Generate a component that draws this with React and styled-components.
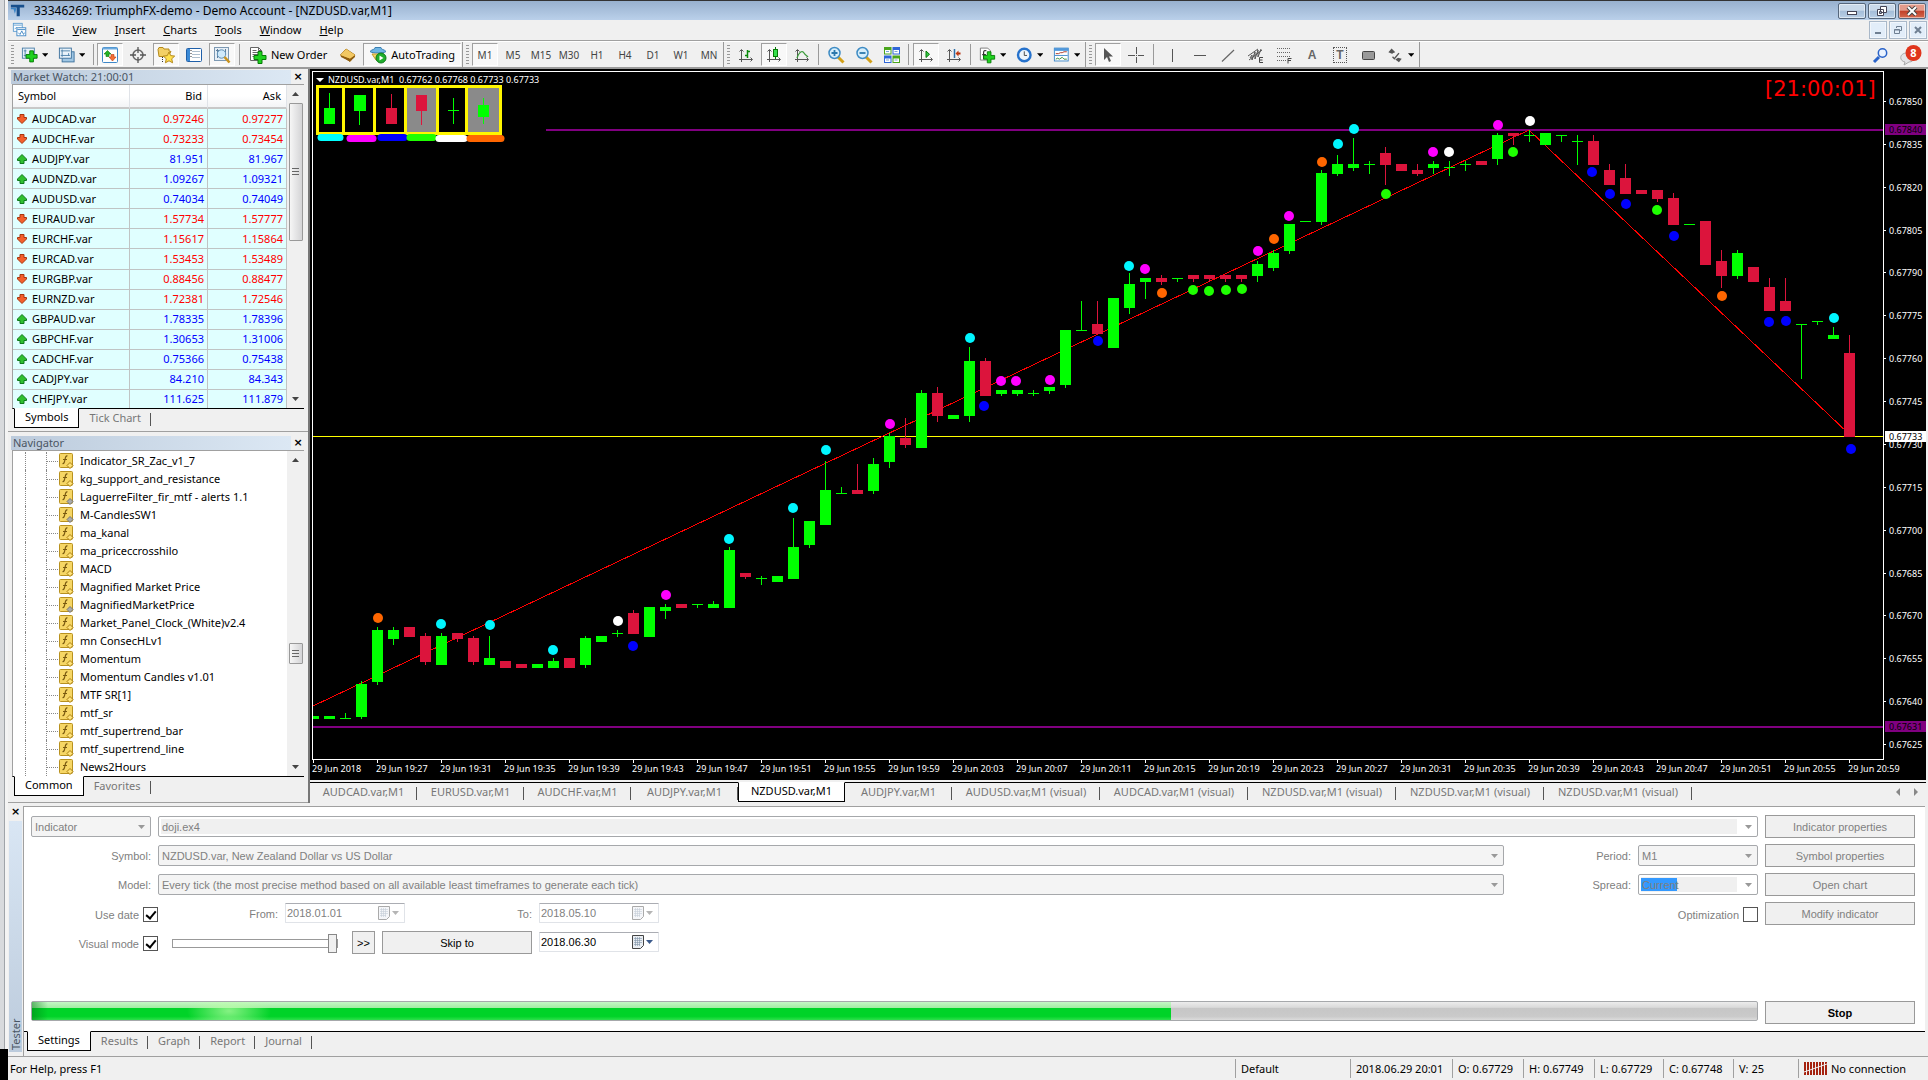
import React, { useState } from "react";
import styled, { createGlobalStyle, css } from "styled-components";

const GlobalStyle = createGlobalStyle`
  * { box-sizing: border-box; }
  body {
    margin: 0;
    background: #f0f0f0;
    font-family: "Noto Sans", "Open Sans", sans-serif;
    font-size: 11px;
    line-height: 16px;
    color: #000;
  }
  button, input, select { font: inherit; color: inherit; margin: 0; padding: 0; }
  svg { display: block; }
`;

/* ---------- data ---------- */

const menus = ["File", "View", "Insert", "Charts", "Tools", "Window", "Help"];
const periods = ["M1", "M5", "M15", "M30", "H1", "H4", "D1", "W1", "MN"];

const quotes = [
  ["AUDCAD.var", "0.97246", "0.97277", "down"],
  ["AUDCHF.var", "0.73233", "0.73454", "down"],
  ["AUDJPY.var", "81.951", "81.967", "up"],
  ["AUDNZD.var", "1.09267", "1.09321", "up"],
  ["AUDUSD.var", "0.74034", "0.74049", "up"],
  ["EURAUD.var", "1.57734", "1.57777", "down"],
  ["EURCHF.var", "1.15617", "1.15864", "down"],
  ["EURCAD.var", "1.53453", "1.53489", "down"],
  ["EURGBP.var", "0.88456", "0.88477", "down"],
  ["EURNZD.var", "1.72381", "1.72546", "down"],
  ["GBPAUD.var", "1.78335", "1.78396", "up"],
  ["GBPCHF.var", "1.30653", "1.31006", "up"],
  ["CADCHF.var", "0.75366", "0.75438", "up"],
  ["CADJPY.var", "84.210", "84.343", "up"],
  ["CHFJPY.var", "111.625", "111.879", "up"],
];

// second value: compiled only, shown with a grey diamond
const indicators = [
  ["Indicator_SR_Zac_v1_7"],
  ["kg_support_and_resistance"],
  ["LaguerreFilter_fir_mtf - alerts 1.1", true],
  ["M-CandlesSW1", true],
  ["ma_kanal"],
  ["ma_priceccrosshilo"],
  ["MACD"],
  ["Magnified Market Price"],
  ["MagnifiedMarketPrice", true],
  ["Market_Panel_Clock_(White)v2.4"],
  ["mn ConsecHLv1"],
  ["Momentum"],
  ["Momentum Candles v1.01"],
  ["MTF SR[1]"],
  ["mtf_sr"],
  ["mtf_supertrend_bar"],
  ["mtf_supertrend_line"],
  ["News2Hours"],
];

const chartTabs = [
  "AUDCAD.var,M1",
  "EURUSD.var,M1",
  "AUDCHF.var,M1",
  "AUDJPY.var,M1",
  "NZDUSD.var,M1",
  "AUDJPY.var,M1",
  "AUDUSD.var,M1 (visual)",
  "AUDCAD.var,M1 (visual)",
  "NZDUSD.var,M1 (visual)",
  "NZDUSD.var,M1 (visual)",
  "NZDUSD.var,M1 (visual)",
];

// one per minute: high, body top, body bottom, low, 1 = bull / 0 = bear
const candles = [
  [716, 716, 719, 719, 1], [716, 716, 719, 719, 1], [713, 718, 719, 719, 1],
  [681, 684, 717, 719, 1], [627, 630, 682, 685, 1], [627, 630, 639, 645, 1],
  [627, 627, 637, 637, 0], [633, 636, 662, 665, 0], [633, 636, 665, 665, 1],
  [633, 633, 639, 642, 0], [636, 638, 662, 665, 0], [636, 658, 665, 665, 1],
  [661, 661, 668, 668, 0], [664, 664, 668, 668, 0], [664, 664, 668, 668, 1],
  [658, 661, 668, 668, 1], [658, 658, 668, 668, 0], [636, 638, 665, 668, 1],
  [636, 636, 642, 642, 1], [630, 633, 634, 637, 1], [610, 613, 634, 634, 0],
  [607, 607, 637, 637, 1], [604, 607, 611, 619, 1], [604, 604, 608, 608, 0],
  [604, 604, 605, 608, 1], [601, 604, 608, 608, 1], [547, 550, 608, 608, 1],
  [573, 573, 577, 579, 0], [576, 578, 579, 585, 1], [576, 576, 582, 582, 1],
  [518, 547, 579, 579, 1], [521, 521, 545, 548, 1], [461, 490, 525, 525, 1],
  [487, 493, 494, 494, 1], [464, 490, 494, 494, 0], [458, 464, 491, 494, 1],
  [433, 436, 462, 468, 1], [418, 438, 445, 448, 0], [390, 393, 448, 448, 1],
  [387, 393, 416, 422, 0], [415, 415, 419, 419, 1], [347, 361, 416, 422, 1],
  [358, 361, 396, 396, 0], [390, 390, 394, 396, 1], [390, 390, 394, 396, 1],
  [390, 393, 394, 396, 1], [387, 387, 391, 394, 1], [330, 330, 385, 388, 1],
  [301, 330, 331, 331, 1], [301, 324, 334, 334, 0], [298, 298, 348, 348, 1],
  [273, 284, 308, 314, 1], [278, 278, 282, 299, 1], [275, 278, 282, 285, 0],
  [278, 278, 279, 282, 1], [275, 275, 279, 282, 0], [275, 275, 279, 282, 0],
  [275, 275, 279, 282, 0], [275, 275, 279, 282, 0], [261, 264, 276, 282, 1],
  [250, 253, 268, 271, 1], [224, 224, 251, 254, 1], [221, 221, 222, 222, 1],
  [170, 173, 222, 225, 1], [155, 164, 174, 176, 1], [138, 164, 168, 171, 1],
  [161, 164, 165, 174, 1], [147, 153, 165, 185, 0], [164, 164, 171, 171, 0],
  [164, 170, 174, 176, 0], [161, 164, 168, 174, 1], [161, 167, 168, 176, 1],
  [161, 164, 165, 171, 1], [161, 161, 165, 165, 0], [133, 135, 159, 165, 1],
  [133, 133, 136, 145, 0], [130, 135, 136, 142, 1], [133, 133, 145, 145, 1],
  [135, 135, 136, 142, 1], [135, 141, 142, 165, 1], [135, 141, 165, 165, 0],
  [164, 170, 185, 185, 0], [164, 178, 194, 194, 0], [190, 190, 194, 194, 0],
  [190, 190, 199, 202, 0], [193, 198, 225, 225, 0], [224, 224, 225, 225, 1],
  [221, 221, 265, 265, 0], [250, 261, 276, 288, 0], [250, 253, 276, 279, 1],
  [267, 267, 282, 282, 0], [278, 287, 311, 311, 0], [278, 301, 311, 311, 0],
  [324, 324, 325, 379, 1], [321, 321, 322, 325, 1], [327, 335, 339, 339, 1],
  [335, 353, 437, 437, 0],
];

const dots = {
  "#ff6600": [[378, 618], [1162, 293], [1274, 239], [1322, 162], [1722, 296]],
  "#00f6ff": [
    [441, 624], [490, 625], [553, 650], [729, 539], [793, 508], [826, 450],
    [970, 338], [1129, 266], [1338, 144], [1354, 129], [1834, 318],
  ],
  "#ffffff": [[618, 621], [1449, 152], [1530, 121]],
  "#0000ff": [
    [633, 646], [984, 406], [1098, 341], [1592, 172], [1610, 194], [1626, 204],
    [1674, 236], [1769, 322], [1786, 321], [1851, 449],
  ],
  "#ff00ff": [
    [666, 595], [890, 424], [1001, 381], [1016, 381], [1050, 380], [1145, 269],
    [1258, 251], [1289, 216], [1433, 152], [1498, 125],
  ],
  "#1eff00": [
    [1193, 290], [1209, 291], [1226, 290], [1242, 289], [1386, 194],
    [1513, 152], [1657, 210],
  ],
};

const timeLabels = Array.from({ length: 25 }, (_, i) => {
  if (i === 0) return "29 Jun 2018";
  const t = 19 * 60 + 23 + i * 4;
  return `29 Jun ${Math.floor(t / 60)}:${String(t % 60).padStart(2, "0")}`;
});

const priceLabels = Array.from({ length: 16 }, (_, i) => (0.6785 - i * 0.00015).toFixed(5));

/* ---------- icons ---------- */

const Plus = ({ x, y }) => (
  <path
    d={`M${x + 4} ${y}h4v4h4v4h-4v4h-4v-4h-4v-4h4z`}
    fill="#1fd21f"
    stroke="#067a06"
  />
);

const Axes = () => (
  <path d="M4.500 16V4M2.500 5.500l2-2 2 2M2 13.500h13M13.500 11.500l2 2-2 2" stroke="#555" fill="none" />
);

const icons = {
  logo: (
    <>
      <path d="M1 2h15v3H11v10H7.500V5H1z" fill="#174f8c" />
      <path d="M1 5.500h6V7L5.500 12 4 7H1z" fill="#3d87c8" />
    </>
  ),
  mdi: (
    <>
      <rect x="1.500" y="1.500" width="10" height="9" fill="#fff" stroke="#5b9bd0" />
      <path d="M2 3.500h9M3 8l2-2 2 2 2-2" stroke="#5b9bd0" fill="none" />
      <rect x="5.500" y="6.500" width="10" height="9" fill="#fff" stroke="#3f86c4" />
      <path d="M6 8.500h9M7 12l2 2 2-4 2 4 1-2" stroke="#3f86c4" fill="none" />
    </>
  ),
  newChart: (
    <>
      <rect x="1.500" y="1.500" width="13" height="11" fill="#e8f2fa" stroke="#4b7fa8" />
      <path d="M4.500 3v8M3 9.500h10M3 4.500h3" stroke="#4b7fa8" />
      <Plus x={5.500} y={4.500} />
    </>
  ),
  profiles: (
    <>
      <rect x="4.500" y="5.500" width="13" height="11" fill="#9fc6e4" stroke="#3c709c" />
      <rect x="1.500" y="1.500" width="13" height="11" fill="#e8f2fa" stroke="#3c709c" />
      <path d="M4.500 3v8M3 9.500h10M3 4.500h10M11.500 7v3" stroke="#4b7fa8" />
    </>
  ),
  market: (
    <>
      <rect x="1.500" y="1.500" width="15" height="15" rx="1" fill="#fff" stroke="#3d87c8" />
      <path d="M2 2.500h14" stroke="#6aa9dd" strokeWidth="2" />
      <path d="M6.500 4.500L10 8H8v2.500H5V8H3z" fill="#25b325" stroke="#0b7a0b" strokeWidth=".6" />
      <path d="M10 8.500h3V11h2l-3.500 4L8 11h2z" fill="#f36f36" stroke="#b93b10" strokeWidth=".6" />
    </>
  ),
  target: (
    <>
      <circle cx="9" cy="9" r="5" fill="none" stroke="#666" strokeWidth="1.500" />
      <path d="M9 1v6M9 11v6M1 9h6M11 9h6" stroke="#555" strokeWidth="1.300" />
    </>
  ),
  favorites: (
    <>
      <path d="M1 3.500l1-2h4l1 1.500h5v2l2 .5-3 5H2z" fill="#f3d066" stroke="#b58a1c" />
      <path d="M5.500 11v6" stroke="#333" strokeDasharray="1 1" />
      <path d="M12 6l1.700 3.600 4 .5-3 2.700.9 4-3.600-2-3.600 2 .9-4-3-2.700 4-.5z" fill="#ffe04d" stroke="#b58a1c" />
    </>
  ),
  navigator: (
    <>
      <rect x="1.500" y="2.500" width="15" height="13" rx="1" fill="#fff" stroke="#1f5fa8" />
      <path d="M3.500 3v12" stroke="#3b8ad6" strokeWidth="3" />
      <path d="M7 5.500h8M7 8.500h8M7 11.500h8" stroke="#aebfce" />
      <path d="M6 4v9" stroke="#222" strokeDasharray="1 2" />
    </>
  ),
  tester: (
    <>
      <rect x="1.500" y="1.500" width="14" height="13" fill="#e7eff6" stroke="#7d99b3" />
      <path d="M4.500 3v9M12.500 3v4M3 4.500h3" stroke="#5e7e9b" />
      <circle cx="8.500" cy="8" r="4.200" fill="#cfe9fa" stroke="#5e8fb5" />
      <path d="M11.500 11l5 5.500" stroke="#c9921d" strokeWidth="2.600" />
    </>
  ),
  order: (
    <>
      <path d="M1.500 1.500h8l3 3v10h-11z" fill="#fff" stroke="#666" />
      <path d="M9.500 1.500v3h3M3.500 4.500h4M3.500 6.500h7M3.500 8.500h6M3.500 10.500h4" stroke="#666" fill="none" />
      <Plus x={5} y={5.500} />
    </>
  ),
  gold: (
    <>
      <path d="M7 3l9 6-5 6.500L1.500 9z" fill="#f0bf45" stroke="#a06d12" />
      <path d="M1.500 9l9.500 3.500v3L2 11zM11 12.500L16 9v2l-5 4.500z" fill="#8f5d10" />
      <path d="M7 3l9 6-5 3.500L1.500 9z" fill="#f2c863" />
    </>
  ),
  auto: (
    <>
      <path d="M1 5.500C3 3 6 4 6 1.500h6c0 2.500 3 1.500 5 4-2 2-14 2-16 0z" fill="#6fb5e3" stroke="#3a7fb2" />
      <path d="M3 8l4 6c2 1 5 0 7-6z" fill="#f5d76b" stroke="#c49a28" />
      <circle cx="12" cy="12" r="5" fill="#1fae2c" stroke="#0c7a17" />
      <path d="M10.500 9.500v5l4-2.500z" fill="#fff" />
    </>
  ),
  bars: (
    <>
      <Axes />
      <path d="M10.500 4v8M8 9.500h2.500M10.500 5.500H13" stroke="#0a8a0a" strokeWidth="1.500" fill="none" />
    </>
  ),
  candle: (
    <>
      <Axes />
      <path d="M10.500 1v12" stroke="#067a06" />
      <rect x="8.500" y="3.500" width="4" height="7" fill="#35e04c" stroke="#067a06" />
    </>
  ),
  line: (
    <>
      <Axes />
      <path d="M4 12C7 4 10 5 11 7s3 3 4 4" stroke="#3a9a3a" strokeWidth="1.300" fill="none" />
    </>
  ),
  zoomIn: (
    <>
      <path d="M11 11l5.500 5.500" stroke="#d2a018" strokeWidth="3" />
      <circle cx="7.500" cy="7" r="5.500" fill="#d6eefb" stroke="#3f8cc4" strokeWidth="1.500" />
      <path d="M4.500 7h6M7.500 4v6" stroke="#2b78ac" strokeWidth="1.800" />
    </>
  ),
  zoomOut: (
    <>
      <path d="M11 11l5.500 5.500" stroke="#d2a018" strokeWidth="3" />
      <circle cx="7.500" cy="7" r="5.500" fill="#d6eefb" stroke="#3f8cc4" strokeWidth="1.500" />
      <path d="M4.500 7h6" stroke="#2b78ac" strokeWidth="1.800" />
    </>
  ),
  tile: (
    <>
      <path d="M1 1h7.500v7.500H1zM9.500 9.500H17V17H9.500z" fill="#49a51c" />
      <path d="M9.500 1H17v7.500H9.500zM1 9.500h7.500V17H1z" fill="#2f66d8" />
      <path d="M2 4h5.500v3.500H2zM10.500 4H16v3.500h-5.500zM2 12.500h5.500V16H2zM10.500 12.500H16V16h-5.500z" fill="#fff" />
      <path d="M3 5.500h3M11.500 5.500h3M3 14h3M11.500 14h3" stroke="#7aa5d8" />
    </>
  ),
  scroll: (
    <>
      <Axes />
      <path d="M9 5v6.500l3.500-3.200z" fill="#35c94a" stroke="#067a06" />
    </>
  ),
  shift: (
    <>
      <Axes />
      <path d="M9.500 3v9" stroke="#2d6fa8" strokeWidth="1.500" />
      <path d="M15.500 7.500h-3" stroke="#b02a08" strokeWidth="2" />
      <path d="M10.500 7.500l3-3v6z" fill="#c23a10" />
    </>
  ),
  indicator: (
    <>
      <path d="M1.500 1.500h8l3 3v10h-11z" fill="#fff" stroke="#777" />
      <path d="M8 4.500c-2-1-3 0-3 2v7M3.500 8.500h4" stroke="#333" strokeWidth="1.300" fill="none" />
      <Plus x={5} y={5.500} />
    </>
  ),
  clock: (
    <>
      <circle cx="9" cy="9" r="6.800" fill="#eef5fb" stroke="#2672cc" strokeWidth="2.600" />
      <path d="M9 5v4.500h3" stroke="#444" fill="none" />
    </>
  ),
  template: (
    <>
      <rect x="1.500" y="1.500" width="15" height="14" fill="#fff" stroke="#3d87c8" />
      <path d="M1 3h16" stroke="#4f97da" strokeWidth="3" />
      <path d="M2 9.500h14" stroke="#3d87c8" />
      <path d="M3 7.500h3l2-1h2l2-1h3" stroke="#a32" fill="none" />
      <path d="M3 13.500l2-1 2 1 3-2 2 2h3" stroke="#383" fill="none" />
    </>
  ),
  cursor: <path d="M5 2v12l3-3 2 5 2-1-2-4.500h4z" fill="#555" />,
  cross: <path d="M9.500 1v7M9.500 11v6M1 9.500h7M11 9.500h6M9 9.500h1" stroke="#555" />,
  vline: <path d="M9.500 3v13" stroke="#555" />,
  hline: <path d="M3 9.500h12" stroke="#555" />,
  trend: <path d="M3 15.500L15 4" stroke="#666" strokeWidth="1.200" />,
  channel: (
    <>
      <path d="M1 10L11 3M2 14l13-10M3 12l2-3v5l3-8v7l3-9v7l3-8" stroke="#555" fill="none" />
      <path d="M16 11.500h-3.500v5H16M12.500 14h3" stroke="#444" fill="none" />
    </>
  ),
  fibo: (
    <>
      <path d="M2 2.500h14M2 6.500h14M2 10.500h14M2 14.500h9" stroke="#666" strokeDasharray="1 1" />
      <path d="M16.500 12.500h-3.500v5M13 14.500h3" stroke="#444" fill="none" />
    </>
  ),
  arrows: (
    <>
      <path d="M5 2l4 4-3 1v1L1.500 6zM12 12l4 1-3 4-4-3z" fill="#555" />
      <path d="M6 11l2 2 5-6" stroke="#555" strokeWidth="1.500" fill="none" />
    </>
  ),
  shape: <rect x="3.500" y="5.500" width="12" height="8" rx="1" fill="#999" stroke="#444" />,
  search: (
    <>
      <path d="M2 16l5-5" stroke="#2a63c9" strokeWidth="3" />
      <circle cx="10.500" cy="7" r="4.200" fill="#eaf3ff" stroke="#2a63c9" strokeWidth="1.500" />
    </>
  ),
};

const Icon = ({ name, size = 18 }) => (
  <svg width={size} height={size} viewBox="0 0 18 18" aria-hidden="true">
    {icons[name]}
  </svg>
);

const Caret = ({ color = "#000" }) => (
  <svg width="7" height="4" viewBox="0 0 7 4" aria-hidden="true">
    <path d="M0 0h7L3.500 4z" fill={color} />
  </svg>
);

const QuoteArrow = ({ dir }) => (
  <svg width="12" height="12" viewBox="0 0 12 12" aria-hidden="true">
    {dir === "up" ? (
      <path d="M6 1.500L10.500 6v1.500H8v3H4v-3H1.500V6z" fill="#2fc02f" stroke="#0f7a1c" />
    ) : (
      <path d="M6 10.500L10.500 6V4.500H8v-3H4v3H1.500V6z" fill="#f4602c" stroke="#a8370f" />
    )}
  </svg>
);

const FunctionIcon = ({ grey }) => (
  <svg width="16" height="16" viewBox="0 0 16 16" aria-hidden="true">
    <rect x="1.500" y=".5" width="13" height="14" rx="1" fill="#f6d665" stroke="#b8911f" />
    <path d="M9.500 3C8 2.500 7.500 4 7 6.500S6 11 4.500 10.500M5 6.500h4" stroke="#7a5a10" strokeWidth="1.200" fill="none" />
    <path d="M12 9.500l3 3-3 3-3-3z" fill={grey ? "#aaa" : "#ffe37a"} stroke={grey ? "#777" : "#a87c10"} />
  </svg>
);

const Calendar = ({ on }) => (
  <svg width="12" height="14" viewBox="0 0 12 14" aria-hidden="true" opacity={on ? 1 : 0.45}>
    <path d="M.5.5h11v10l-3 3h-8z" fill="#e9edf2" stroke="#444" />
    <path d="M2 3.500h8M2 5.500h8M2 7.500h8M2 9.500h6M3.500 2v9M5.500 2v9M7.500 2v9" stroke="#7f93a8" strokeWidth=".6" />
  </svg>
);

/* ---------- frame ---------- */

const Screen = styled.div`
  display: flex;
  min-height: 100vh;
`;

const BackWindow = styled.div`
  flex: 0 0 8px;
  background: linear-gradient(to right, #d8dadd 0, #d8dadd 4px, #a0a4a9 4px, #a0a4a9 5px, #f4f4f4 5px);
  border-bottom: 31px solid #000;
`;

const AppWindow = styled.div`
  flex: 1;
  min-width: 0;
  display: flex;
  flex-direction: column;
  background: #f0f0f0;
`;

const TitleBar = styled.header`
  display: flex;
  align-items: center;
  height: 20px;
  padding: 0 2px;
  gap: 8px;
  border-top: 1px solid #333;
  background: linear-gradient(#98b1ce, #bad0ea);
  h1 {
    flex: 1;
    margin: 0;
    font-size: 12px;
    font-weight: 400;
  }
`;

const ControlGroup = styled.div`
  display: flex;
  gap: 2px;
`;

const WindowButton = styled.button`
  display: grid;
  place-items: center;
  width: 28px;
  height: 16px;
  border: 1px solid #56677c;
  border-radius: 2px;
  background: ${(p) =>
    p.$close
      ? "linear-gradient(#e39b8b 45%, #c1402a 50%, #d46a4f)"
      : "linear-gradient(#c9d9ea 45%, #a4bdd8 50%, #b9cfe6)"};
  box-shadow: inset 0 0 0 1px rgba(255, 255, 255, 0.5);
`;

const MdiButton = styled(WindowButton)`
  width: 18px;
  height: 18px;
  border-color: #a9b8c9;
  border-radius: 0;
  background: #e2edf9;
`;

const MenuBar = styled.nav`
  display: flex;
  align-items: center;
  height: 21px;
  padding: 0 1px 0 4px;
  border-bottom: 1px solid #a0a0a0;
  ul {
    flex: 1;
    display: flex;
    margin: 0;
    padding: 0;
    list-style: none;
  }
  a {
    padding: 0 9px;
    color: #000;
    text-decoration: none;
  }
`;

const Toolbar = styled.div`
  display: flex;
  height: 28px;
  padding-right: 4px;
  border-top: 1px solid #fff;
  border-bottom: 2px solid #9a9a9a;
`;

const ToolGroup = styled.div`
  display: flex;
  align-items: center;
  border-right: 1px solid #9a9a9a;
  &::before {
    content: "";
    width: 3px;
    height: 20px;
    margin: 0 2px 0 3px;
    background: repeating-linear-gradient(#999 0 1px, transparent 1px 3px);
  }
`;

const Separator = styled.span`
  flex: none;
  width: ${(p) => (p.$wide ? 8 : 6)}px;
  height: 21px;
  background: linear-gradient(#9a9a9a, #9a9a9a) center / 1px 100% no-repeat;
`;

const pressed = css`
  border-color: #a0a0a0 #fff #fff #a0a0a0;
  background: #f8f8f8;
`;

const toolWidth = (p) => {
  if (p.$menu) return "35px";
  return p.$label ? "auto" : "26px";
};

const ToolButton = styled.button`
  display: flex;
  align-items: center;
  justify-content: ${(p) => (p.$menu ? "flex-start" : "center")};
  gap: 4px;
  flex: none;
  width: ${toolWidth};
  height: 23px;
  margin: 0 1px;
  padding: 0 3px;
  border: 1px solid transparent;
  background: none;
  color: ${(p) => (p.$label ? "#000" : "#444")};
  font-size: ${(p) => (p.$label ? 11 : 10)}px;
  white-space: nowrap;
  ${(p) => p.$label && "padding: 0 5px;"}
  ${(p) => p.$on && pressed}
`;

const TextGlyph = styled.span`
  font: bold 12px/14px "Liberation Sans", sans-serif;
  color: #666;
  ${(p) => p.$boxed && "border: 1px dotted #555; padding: 0 2px;"}
`;

const ToolEnd = styled.div`
  display: flex;
  align-items: center;
  gap: 10px;
  margin-left: auto;
`;

/* ---------- side panels ---------- */

const Main = styled.main`
  display: flex;
  flex: 1;
`;

const Side = styled.aside`
  display: flex;
  flex-direction: column;
  flex: 0 0 302px;
  border-right: 2px solid #777;
`;

const Panel = styled.section`
  display: flex;
  flex-direction: column;
  padding: 1px 4px 2px 3px;
  border-bottom: 1px solid #a0a0a0;
  & + & { flex: 1; padding-top: 4px; }
`;

const PanelTitle = styled.h2`
  display: flex;
  justify-content: space-between;
  align-items: center;
  height: 14px;
  margin: 0;
  padding: 0 0 0 2px;
  background: linear-gradient(to right, #bccbdc, #dce8f4) no-repeat 0 0 / 280px 100%;
  font-size: 11px;
  font-weight: 400;
  line-height: 12px;
  color: #4a5563;
`;

const CloseButton = styled.button`
  width: 12px;
  height: 12px;
  border: 0;
  background: none;
  font: bold 11px/10px "DejaVu Sans", sans-serif;
  color: #000;
`;

const PanelBody = styled.div`
  display: flex;
  height: ${(p) => p.$height}px;
  margin-left: 1px;
  border: 1px solid #a0a0a0;
  border-width: 1px 0 0 1px;
  border-bottom: 1px solid #000;
  background: #fff;
  overflow: hidden;
`;

const QuoteTable = styled.table`
  flex: 1;
  height: 325px;
  border-spacing: 0;
  table-layout: fixed;
  th {
    height: 24px;
    padding: 0 5px;
    border-right: 1px solid #e0e3e8;
    border-bottom: 2px solid #c8c8c8;
    background: linear-gradient(#fff 50%, #f3f4f6);
    font-weight: 400;
    text-align: right;
  }
  th:first-child { width: 117px; text-align: left; }
  th:nth-child(2) { width: 78px; }
  td {
    height: 20px;
    padding: 0 3px;
    border-right: 1px solid #c0c4c4;
    border-bottom: 1px solid #c0c4c4;
    background: #e0ffff;
    text-align: right;
  }
`;

const QuoteRow = styled.tr`
  color: ${(p) => (p.$dir === "up" ? "#0000ff" : "#ff0000")};
`;

const SymbolName = styled.span`
  display: flex;
  align-items: center;
  gap: 4px;
  color: #000;
`;

const ScrollTrack = styled.div`
  display: flex;
  flex-direction: column;
  align-items: center;
  flex: 0 0 17px;
  background: #f0f0f0;
`;

const ScrollArrow = styled.button`
  display: grid;
  place-items: center;
  width: 16px;
  height: 18px;
  border: 0;
  background: none;
  ${(p) => p.$up && "transform: scaleY(-1);"}
  ${(p) => p.$end && "margin-top: auto;"}
`;

const ScrollThumb = styled.div`
  display: grid;
  place-items: center;
  width: 14px;
  height: ${(p) => p.$size}px;
  margin-top: ${(p) => p.$from}px;
  border: 1px solid #999;
  border-radius: 1px;
  background: linear-gradient(to right, #f6f6f6, #d4d4d6);
  &::before {
    content: "";
    width: 7px;
    height: 8px;
    background: repeating-linear-gradient(#666 0 1px, transparent 1px 3px);
  }
`;

const Tree = styled.ul`
  flex: 1;
  margin: 0;
  padding: 1px 0 0 12px;
  list-style: none;
  li {
    display: flex;
    align-items: center;
    height: 18px;
    gap: 6px;
    border-left: 1px dotted #888;
    white-space: nowrap;
  }
`;

const Branch = styled.span`
  display: flex;
  align-items: center;
  width: 32px;
  height: 18px;
  padding-left: 20px;
  margin-right: -6px;
  &::before {
    content: "";
    height: 18px;
    border-left: 1px dotted #888;
  }
  &::after {
    content: "";
    flex: 1;
    border-top: 1px dotted #888;
  }
`;

const TabRow = styled.div`
  display: flex;
  height: ${(p) => p.$height || 20}px;
  padding-left: 3px;
`;

const Tab = styled.button`
  position: relative;
  flex: none;
  height: 20px;
  margin-top: -1px;
  padding: 0 10px 2px;
  border: 0;
  border-top: 1px solid transparent;
  background: none;
  color: #777;
  ${(p) =>
    p.$active
      ? css`
          border: 1px solid #000;
          border-top-color: #fff;
          background: #fff;
          color: #000;
        `
      : css`
          &::after {
            content: "";
            position: absolute;
            right: 0;
            top: 4px;
            height: 13px;
            border-right: 1px solid #555;
          }
        `}
`;

/* ---------- chart ---------- */

const ChartArea = styled.section`
  flex: 1;
  min-width: 0;
  display: flex;
  flex-direction: column;
  padding-right: 2px;
  & > svg {
    width: 100%;
    background: #000;
  }
`;

const ChartTabs = styled.div`
  display: flex;
  height: 20px;
  margin-top: 2px;
  border-top: 1px solid #000;
`;

const ChartTab = styled(Tab)`
  width: ${(p) => (p.$long ? 148 : 107)}px;
  padding: 0 0 2px;
  white-space: nowrap;
`;

const TabScroller = styled.div`
  display: flex;
  gap: 14px;
  margin: 5px 8px 0 auto;
`;

/* ---------- tester ---------- */

const Tester = styled.section`
  display: flex;
  height: 251px;
  margin-top: 3px;
  border-bottom: 1px solid #a0a0a0;
`;

const TesterRail = styled.div`
  display: flex;
  flex-direction: column;
  align-items: center;
  width: 15px;
  padding-bottom: 4px;
  h2 {
    flex: 1;
    margin: 3px 0 0;
    padding-top: 2px;
    width: 13px;
    background: linear-gradient(#bccbdc, #d9e6f4);
    writing-mode: vertical-rl;
    transform: rotate(180deg);
    font-size: 11px;
    font-weight: 400;
    line-height: 13px;
    color: #4a5563;
  }
`;

const TesterPanel = styled.div`
  flex: 1;
  display: flex;
  flex-direction: column;
  margin-right: 3px;
  border: 1px solid #a0a0a0;
  border-width: 1px 0 0 1px;
`;

const TesterForm = styled.form`
  flex: 1;
  display: grid;
  grid-template-columns: 120px minmax(0, 1fr) 120px 120px 150px;
  grid-template-rows: repeat(5, 23px) 1fr 23px;
  gap: 6px 7px;
  padding: 8px 10px 7px 7px;
  border-bottom: 1px solid #000;
  background: #fff;
  font: 11px/14px "Liberation Sans", sans-serif;
  color: #808080;
`;

const FieldLabel = styled.label`
  align-self: center;
  text-align: right;
  ${(p) => p.$width && `width: ${p.$width}px; padding-right: 7px;`}
`;

const ComboFrame = styled.div`
  display: grid;
  grid-template-columns: minmax(0, 1fr) 18px;
  align-items: center;
  align-self: center;
  height: 21px;
  padding: 2px;
  border: 1px solid #a6a8ab;
  border-radius: 2px;
  background: ${(p) => (p.$editable ? "#fff" : "#f4f4f4")};
  grid-column: ${(p) => p.$span || "auto"};
  & > svg { justify-self: end; margin-right: 3px; }
  select, input {
    appearance: none;
    width: 100%;
    height: 15px;
    padding: 0 1px;
    border: 0;
    outline: 0;
    opacity: 1;
    color: #808080;
    background: ${(p) => (p.$editable ? "#f0f0f0" : "none")};
  }
`;

const SpreadInput = styled.input`
  && {
    background: linear-gradient(#3399ff, #3399ff) no-repeat 0 1px / 36px 13px #f0f0f0;
  }
`;

const FormLine = styled.div`
  grid-column: 1 / 3;
  display: flex;
`;

const CheckLabel = styled.label`
  display: flex;
  justify-content: flex-end;
  align-items: center;
  align-self: center;
  gap: 4px;
  width: ${(p) => (p.$fill ? "auto" : "127px")};
  grid-column: ${(p) => p.$span || "auto"};
  padding-top: 2px;
  input {
    appearance: none;
    display: grid;
    place-items: center;
    width: 15px;
    height: 15px;
    border: 1px solid #555;
    background: #fff;
  }
  input:checked::before {
    content: "";
    width: 4px;
    height: 8px;
    margin-top: -2px;
    border: solid #000;
    border-width: 0 2px 2px 0;
    transform: rotate(40deg);
  }
`;

const DateFrame = styled.div`
  display: flex;
  align-items: center;
  gap: 2px;
  width: 120px;
  height: 20px;
  margin-top: 1px;
  padding-right: 5px;
  border: 1px solid #e0e3e8;
  border-top-color: #abadb3;
  border-radius: 1px;
  background: #fff;
  input {
    flex: 1;
    min-width: 0;
    padding: 0 1px;
    border: 0;
    background: none;
    color: ${(p) => (p.$on ? "#000" : "#808080")};
  }
`;

const SpeedSlider = styled.input`
  appearance: none;
  width: 166px;
  height: 19px;
  margin: 3px 14px 0;
  background: none;
  &::-webkit-slider-runnable-track {
    height: 9px;
    border: 1px solid #999;
    background: #fff;
  }
  &::-webkit-slider-thumb {
    appearance: none;
    width: 9px;
    height: 19px;
    margin-top: -6px;
    border: 1px solid #888;
    background: #f0f0f0;
  }
`;

const PushButton = styled.button`
  width: ${(p) => (p.$square ? "23px" : "150px")};
  height: 23px;
  border: 1px solid #999;
  background: #f0f0f0;
  color: ${(p) => (p.disabled ? "#808080" : "#000")};
  font-weight: ${(p) => (p.$strong ? 700 : 400)};
  grid-column: ${(p) => p.$span || "auto"};
  grid-row: ${(p) => p.$row || "auto"};
  ${(p) => p.$gap && "margin-right: 7px;"}
`;

const ProgressTrack = styled.div`
  grid-column: 1 / 5;
  grid-row: 7;
  align-self: start;
  height: 20px;
  border: 1px solid #a6a8ab;
  border-radius: 2px;
  background: linear-gradient(#ececec 0, #dadada 30%, #c6c6c6 34%, #cacaca 80%, #dcdcdc);
`;

const ProgressFill = styled.div`
  height: 18px;
  background:
    radial-gradient(ellipse 42px 22px at 197px 9px, rgba(190, 255, 170, 0.7), transparent),
    linear-gradient(to right, rgba(0, 120, 20, 0.5), transparent 16px),
    linear-gradient(#c4f7c4 0, #a4eca4 32%, #00d328 36%, #00d328 80%, #2fe04c);
`;

const StatusBar = styled.footer`
  display: flex;
  align-items: center;
  height: 23px;
  padding-left: 2px;
`;

const HelpText = styled.span`
  flex: 1;
`;

const StatusCell = styled.span`
  display: flex;
  align-items: center;
  gap: 4px;
  height: 19px;
  width: ${(p) => p.$width}px;
  padding-left: 5px;
  border-left: 1px solid #a0a0a0;
  white-space: nowrap;
`;

/* ---------- parts ---------- */

const Tool = ({ name, menu, on, label, children }) => (
  <ToolButton type="button" $menu={menu} $on={on} $label={label} aria-label={label || name}>
    {name && <Icon name={name} />}
    {label}
    {children}
    {menu && <Caret />}
  </ToolButton>
);

const ScrollBar = ({ from = 0, size }) => (
  <ScrollTrack>
    <ScrollArrow type="button" $up aria-label="Scroll up"><Caret color="#444" /></ScrollArrow>
    <ScrollThumb $from={from} $size={size} />
    <ScrollArrow type="button" $end aria-label="Scroll down"><Caret color="#444" /></ScrollArrow>
  </ScrollTrack>
);

const Tabs = ({ names, height }) => {
  const [active, setActive] = useState(names[0]);
  return (
    <TabRow $height={height}>
      {names.map((name) => (
        <Tab key={name} type="button" $active={name === active} onClick={() => setActive(name)}>
          {name}
        </Tab>
      ))}
    </TabRow>
  );
};

const Combo = ({ id, value, span, editable, label }) => (
  <ComboFrame $span={span} $editable={editable}>
    {editable ? (
      <input id={id} aria-label={label} defaultValue={value} disabled />
    ) : (
      <select id={id} aria-label={label} disabled>
        <option>{value}</option>
      </select>
    )}
    <Caret color="#999" />
  </ComboFrame>
);

const DateField = ({ id, value, on, label }) => (
  <DateFrame $on={on}>
    <input id={id} aria-label={label} defaultValue={value} disabled={!on} />
    <Calendar on={on} />
    <Caret color={on ? "#3b5a8c" : "#b5b5b5"} />
  </DateFrame>
);

const Legend = () => (
  <g shapeRendering="crispEdges">
    <path d="M407 87h29v46h-29zM468 87h31v46h-31z" fill="#8a8a8a" />
    <path
      d="M317.500 86.500h183v47h-183zM343.500 86v47M374.500 86v47M405.500 86v47M437.500 86v47M466.500 86v47"
      fill="none"
      stroke="#fff600"
      strokeWidth="3"
    />
    <path
      d="M329 93h1v15h5v16h-11v-16h5zM354 95h12v16h-6v14h-1v-14h-5zM453 98h1v12h5v1h-5v13h-1v-13h-5v-1h5zM483 98h1v7h5v12h-5v7h-1v-7h-5v-12h5z"
      fill="#00ff00"
    />
    <path d="M391 94h1v14h5v16h-11v-16h5zM416 95h11v16h-5v14h-1v-14h-5z" fill="#dc143c" />
    <g strokeWidth="7" strokeLinecap="round" shapeRendering="auto">
      <path d="M321 137.500h19" stroke="#00ffff" />
      <path d="M350 138.500h23" stroke="#ff00ff" />
      <path d="M381 137.500h23" stroke="#0000ff" />
      <path d="M410 137.500h23" stroke="#1eff00" />
      <path d="M439 138.500h25" stroke="#ffffff" />
      <path d="M470 138.500h31" stroke="#ff6600" />
    </g>
  </g>
);

const Chart = () => (
  <svg height="711" viewBox="310 69 1616 711" preserveAspectRatio="xMaxYMin meet" role="img" aria-label="NZDUSD.var,M1">
    <g shapeRendering="crispEdges">
      <path d="M546 129h1337v2H546zM313 726h1570v2H313z" fill="#800080" />
      <path d="M313 436h1570v1H313z" fill="#ffff00" />
      <path d="M313 706L1529 130L1849 434" stroke="#ff0000" fill="none" />
      {candles.map(([high, top, bottom, low, bull], i) => {
        const x = 313 + i * 16;
        const left = Math.max(x - 5, 313);
        return (
          <g key={i} fill={bull ? "#00ff00" : "#dc143c"}>
            <rect x={x} y={high} width="1" height={low - high} />
            <rect x={left} y={top} width={x + 6 - left} height={bottom - top} />
          </g>
        );
      })}
      <path d="M312.500 759.500V71.500H1883.500V759.500Z" stroke="#fff" fill="none" />
      {timeLabels.map((t, i) => (
        <rect key={t} x={313 + i * 64} y="759" width="1" height="4" fill="#fff" />
      ))}
      {priceLabels.map((p, i) => (
        <rect key={p} x="1883" y={Math.round(101 + i * 42.87)} width="3" height="1" fill="#fff" />
      ))}
    </g>
    {Object.entries(dots).map(([color, points]) =>
      points.map(([x, y]) => <circle key={`${x}-${y}`} cx={x} cy={y} r="5" fill={color} />)
    )}
    <Legend />
    <g fill="#fff" fontSize="9" fontFamily="Noto Sans, sans-serif">
      {timeLabels.map((t, i) => (
        <text key={t} x={312 + i * 64} y="772">{t}</text>
      ))}
      {priceLabels.map((p, i) => (
        <text key={p} x="1889" y={Math.round(105 + i * 42.87)}>{p}</text>
      ))}
      <path d="M1885 124h41v11h-41zM1885 721h41v11h-41z" fill="#800080" />
      <text x="1889" y="133" fill="#000">0.67840</text>
      <text x="1889" y="730" fill="#000">0.67631</text>
      <path d="M1885 431h41v11h-41z" />
      <text x="1889" y="440" fill="#000">0.67733</text>
      <path d="M316 78h8l-4 4z" />
      <text x="328" y="83">{"NZDUSD.var,M1\u00a0 0.67762 0.67768 0.67733 0.67733"}</text>
    </g>
    <text x="1765" y="96" fill="#ff0000" fontSize="21" fontFamily="DejaVu Sans, sans-serif">[21:00:01]</text>
  </svg>
);

const ConnectionBars = () => (
  <svg width="23" height="13" viewBox="0 0 23 13" aria-hidden="true">
    {[0, 3, 6, 9, 12, 15, 18, 21].map((x) => (
      <rect key={x} x={x} y="0" width="2" height="13" fill="#a5220f" />
    ))}
    <path d="M0 10L23 2" stroke="#f0f0f0" />
  </svg>
);

export default function App() {
  const [chart, setChart] = useState(4);

  return (
    <Screen>
      <GlobalStyle />
      <BackWindow />
      <AppWindow>
        <TitleBar>
          <Icon name="logo" size={16} />
          <h1>33346269: TriumphFX-demo - Demo Account - [NZDUSD.var,M1]</h1>
          <ControlGroup>
            <WindowButton type="button" aria-label="Minimize">
              <svg width="12" height="10"><rect x="1.500" y="5.500" width="9" height="3" fill="#fff" stroke="#445" /></svg>
            </WindowButton>
            <WindowButton type="button" aria-label="Restore">
              <svg width="12" height="12"><path d="M4.500 1.500h6v6h-6zM1.500 4.500h6v6h-6z" fill="#fff" stroke="#445" /><path d="M3.500 6.500h2v2h-2z" fill="#9ab" stroke="#445" /></svg>
            </WindowButton>
            <WindowButton type="button" $close aria-label="Close">
              <svg width="12" height="10"><path d="M2 1l8 8M10 1L2 9" stroke="#444" strokeWidth="4" /><path d="M2 1l8 8M10 1L2 9" stroke="#fff" strokeWidth="2" /></svg>
            </WindowButton>
          </ControlGroup>
        </TitleBar>

        <MenuBar>
          <Icon name="mdi" size={16} />
          <ul>
            {menus.map((m) => (
              <li key={m}><a href={`#${m.toLowerCase()}`}><u>{m[0]}</u>{m.slice(1)}</a></li>
            ))}
          </ul>
          <ControlGroup>
            <MdiButton type="button" aria-label="Minimize chart">
              <svg width="10" height="10"><path d="M2 8h6" stroke="#6f7f92" strokeWidth="2" /></svg>
            </MdiButton>
            <MdiButton type="button" aria-label="Restore chart">
              <svg width="10" height="10"><path d="M3.500 3V1.500h5v4H7M1.500 4.500h5v4h-5zM1.500 5h5" fill="none" stroke="#6f7f92" /></svg>
            </MdiButton>
            <MdiButton type="button" aria-label="Close chart">
              <svg width="10" height="10"><path d="M2 2l6 6M8 2L2 8" stroke="#6f7f92" strokeWidth="2" /></svg>
            </MdiButton>
          </ControlGroup>
        </MenuBar>

        <Toolbar>
          <ToolGroup>
            <Tool name="newChart" menu />
            <Tool name="profiles" menu />
            <Separator />
            <Tool name="market" on />
            <Tool name="target" />
            <Tool name="favorites" on />
            <Tool name="navigator" />
            <Tool name="tester" on />
            <Separator />
            <Tool name="order" label="New Order" />
            <Tool name="gold" />
            <Tool name="auto" label="AutoTrading" on />
          </ToolGroup>
          <ToolGroup>
            {periods.map((p) => (
              <Tool key={p} on={p === "M1"}>{p}</Tool>
            ))}
          </ToolGroup>
          <ToolGroup>
            <Tool name="bars" />
            <Tool name="candle" on />
            <Tool name="line" />
            <Separator />
            <Tool name="zoomIn" />
            <Tool name="zoomOut" />
            <Tool name="tile" />
            <Separator />
            <Tool name="scroll" on />
            <Tool name="shift" />
            <Separator />
            <Tool name="indicator" menu />
            <Tool name="clock" menu />
            <Tool name="template" menu />
          </ToolGroup>
          <ToolGroup>
            <Tool name="cursor" on />
            <Tool name="cross" />
            <Separator $wide />
            <Tool name="vline" />
            <Tool name="hline" />
            <Tool name="trend" />
            <Tool name="channel" />
            <Tool name="fibo" />
            <Tool><TextGlyph>A</TextGlyph></Tool>
            <Tool><TextGlyph $boxed>T</TextGlyph></Tool>
            <Tool name="shape" />
            <Tool name="arrows" menu />
          </ToolGroup>
          <ToolEnd>
            <Icon name="search" />
            <svg width="24" height="22" viewBox="0 0 24 22" role="img" aria-label="8 messages">
              <path d="M7 9c-8 0-8 8-2 9l-1 3 5-3c7 0 7-9-2-9z" fill="#e4e4e6" stroke="#aaa" />
              <circle cx="13.500" cy="9" r="8" fill="#e0351c" />
              <text x="13.500" y="13" fontSize="11" fontWeight="700" fill="#fff" textAnchor="middle">8</text>
            </svg>
          </ToolEnd>
        </Toolbar>

        <Main>
          <Side>
            <Panel>
              <PanelTitle>
                Market Watch: 21:00:01
                <CloseButton type="button" aria-label="Close Market Watch">×</CloseButton>
              </PanelTitle>
              <PanelBody $height={325}>
                <QuoteTable>
                  <thead>
                    <tr><th>Symbol</th><th>Bid</th><th>Ask</th></tr>
                  </thead>
                  <tbody>
                    {quotes.map(([name, bid, ask, dir]) => (
                      <QuoteRow key={name} $dir={dir}>
                        <td><SymbolName><QuoteArrow dir={dir} />{name}</SymbolName></td>
                        <td>{bid}</td>
                        <td>{ask}</td>
                      </QuoteRow>
                    ))}
                  </tbody>
                </QuoteTable>
                <ScrollBar size={138} />
              </PanelBody>
              <Tabs names={["Symbols", "Tick Chart"]} />
            </Panel>
            <Panel>
              <PanelTitle>
                Navigator
                <CloseButton type="button" aria-label="Close Navigator">×</CloseButton>
              </PanelTitle>
              <PanelBody $height={327}>
                <Tree>
                  {indicators.map(([name, grey]) => (
                    <li key={name}><Branch /><FunctionIcon grey={grey} />{name}</li>
                  ))}
                </Tree>
                <ScrollBar from={174} size={21} />
              </PanelBody>
              <Tabs names={["Common", "Favorites"]} />
            </Panel>
          </Side>

          <ChartArea>
            <Chart />
            <ChartTabs>
              {chartTabs.map((name, i) => (
                <ChartTab key={i} type="button" $long={name.includes("visual")} $active={i === chart} onClick={() => setChart(i)}>
                  {name}
                </ChartTab>
              ))}
              <TabScroller>
                <svg width="4" height="8"><path d="M4 0v8L0 4z" fill="#888" /></svg>
                <svg width="4" height="8"><path d="M0 0v8l4-4z" fill="#888" /></svg>
              </TabScroller>
            </ChartTabs>
          </ChartArea>
        </Main>

        <Tester>
          <TesterRail>
            <CloseButton type="button" aria-label="Close Tester">×</CloseButton>
            <h2>Tester</h2>
          </TesterRail>
          <TesterPanel>
            <TesterForm onSubmit={(e) => e.preventDefault()}>
              <Combo value="Indicator" label="Type" />
              <Combo value="doji.ex4" label="File" span="2 / 5" editable />
              <PushButton type="button" disabled>Indicator properties</PushButton>

              <FieldLabel htmlFor="symbol">Symbol:</FieldLabel>
              <Combo id="symbol" value="NZDUSD.var, New Zealand Dollar vs US Dollar" />
              <FieldLabel htmlFor="period">Period:</FieldLabel>
              <Combo id="period" value="M1" />
              <PushButton type="button" disabled>Symbol properties</PushButton>

              <FieldLabel htmlFor="model">Model:</FieldLabel>
              <Combo id="model" value="Every tick (the most precise method based on all available least timeframes to generate each tick)" />
              <FieldLabel htmlFor="spread">Spread:</FieldLabel>
              <ComboFrame $editable>
                <SpreadInput id="spread" defaultValue="Current" disabled />
                <Caret color="#999" />
              </ComboFrame>
              <PushButton type="button" disabled>Open chart</PushButton>

              <FormLine>
                <CheckLabel>Use date<input type="checkbox" defaultChecked /></CheckLabel>
                <FieldLabel htmlFor="from" $width={127}>From:</FieldLabel>
                <DateField id="from" value="2018.01.01" />
                <FieldLabel htmlFor="to" $width={134}>To:</FieldLabel>
                <DateField id="to" value="2018.05.10" />
              </FormLine>
              <CheckLabel $fill $span="3 / 5">Optimization<input type="checkbox" /></CheckLabel>
              <PushButton type="button" disabled>Modify indicator</PushButton>

              <FormLine>
                <CheckLabel>Visual mode<input type="checkbox" defaultChecked /></CheckLabel>
                <SpeedSlider type="range" aria-label="Speed" defaultValue="100" />
                <PushButton type="button" $square $gap>&gt;&gt;</PushButton>
                <PushButton type="button" $gap>Skip to</PushButton>
                <DateField value="2018.06.30" label="Skip to date" on />
              </FormLine>

              <ProgressTrack role="progressbar" aria-valuenow={66}>
                <ProgressFill style={{ width: "66%" }} />
              </ProgressTrack>
              <PushButton type="button" $strong $row={7} $span="5">Stop</PushButton>
            </TesterForm>
            <Tabs names={["Settings", "Results", "Graph", "Report", "Journal"]} height={24} />
          </TesterPanel>
        </Tester>

        <StatusBar>
          <HelpText>For Help, press F1</HelpText>
          <StatusCell $width={115}>Default</StatusCell>
          <StatusCell $width={102}>2018.06.29 20:01</StatusCell>
          <StatusCell $width={71}>O: 0.67729</StatusCell>
          <StatusCell $width={71}>H: 0.67749</StatusCell>
          <StatusCell $width={69}>L: 0.67729</StatusCell>
          <StatusCell $width={70}>C: 0.67748</StatusCell>
          <StatusCell $width={65}>V: 25</StatusCell>
          <StatusCell $width={130}><ConnectionBars />No connection</StatusCell>
        </StatusBar>
      </AppWindow>
    </Screen>
  );
}
